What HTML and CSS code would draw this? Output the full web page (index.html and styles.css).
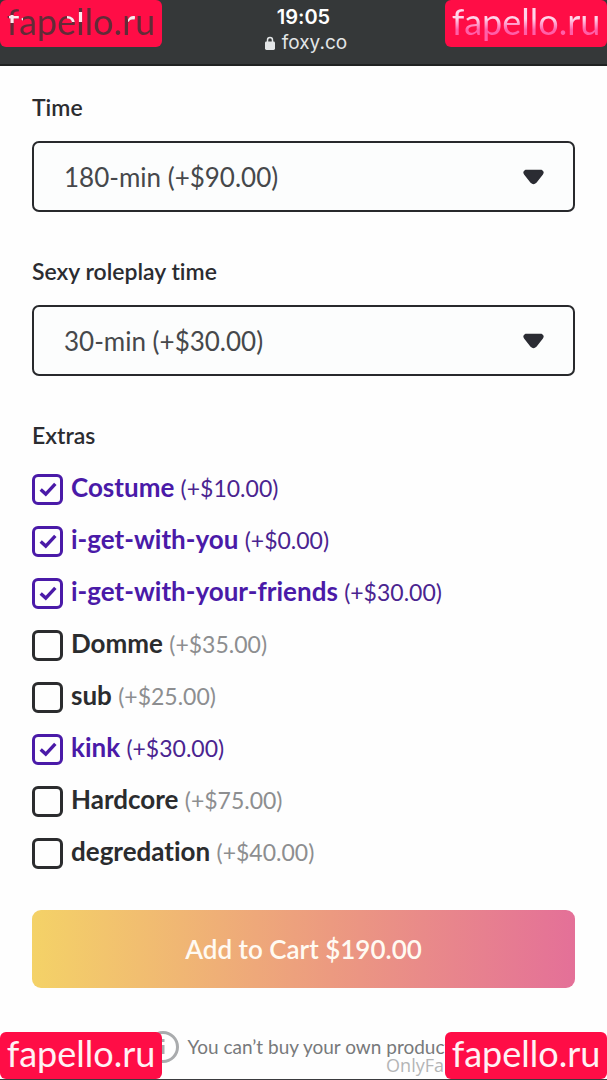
FILE: index.html
```html
<!DOCTYPE html>
<html lang="en">
<head>
<meta charset="utf-8">
<meta name="viewport" content="width=device-width, initial-scale=1">
<title>foxy.co</title>
<link rel="stylesheet" href="styles.css">
</head>
<body>
<div class="screen">
  <header class="browser-bar">
    <div class="clock">19:05</div>
    <div class="address">
      <svg class="lock" viewBox="0 0 12 14" aria-hidden="true"><path d="M3.500 7V4a2.500 2.500 0 0 1 5 0V7" fill="none" stroke="currentColor" stroke-width="1.500"/><rect x="1" y="5.500" width="10" height="8.500" rx="1.400" fill="currentColor"/></svg>
      <span>foxy.co</span>
    </div>
  </header>
  <main class="product">
    <form class="options">
      <div class="field">
        <label class="label" for="time">Time</label>
        <div class="select-wrap">
          <select class="select" id="time"><option>180-min (+$90.00)</option></select>
          <svg class="arrow" viewBox="0 0 20 14" aria-hidden="true"><path d="M3 1.500H17Q19 2.500 17.500 4.500L12 11.500Q10 13.500 8 11.500L2.500 4.500Q1 2.500 3 1.500Z" fill="currentColor" stroke="currentColor" stroke-width="1.500" stroke-linejoin="round"/></svg>
        </div>
      </div>
      <div class="field">
        <label class="label" for="roleplay">Sexy roleplay time</label>
        <div class="select-wrap">
          <select class="select" id="roleplay"><option>30-min (+$30.00)</option></select>
          <svg class="arrow" viewBox="0 0 20 14" aria-hidden="true"><path d="M3 1.500H17Q19 2.500 17.500 4.500L12 11.500Q10 13.500 8 11.500L2.500 4.500Q1 2.500 3 1.500Z" fill="currentColor" stroke="currentColor" stroke-width="1.500" stroke-linejoin="round"/></svg>
        </div>
      </div>
      <fieldset class="extras">
        <legend class="label">Extras</legend>
        <label class="extra"><span class="box"><input class="check" type="checkbox" checked><svg class="tick" viewBox="0 0 16 14" aria-hidden="true"><path d="M1.500 7.500L6 11.500L14.500 2.500"/></svg></span><span class="name">Costume <span class="price">(+$10.00)</span></span></label>
        <label class="extra"><span class="box"><input class="check" type="checkbox" checked><svg class="tick" viewBox="0 0 16 14" aria-hidden="true"><path d="M1.500 7.500L6 11.500L14.500 2.500"/></svg></span><span class="name">i-get-with-you <span class="price">(+$0.00)</span></span></label>
        <label class="extra"><span class="box"><input class="check" type="checkbox" checked><svg class="tick" viewBox="0 0 16 14" aria-hidden="true"><path d="M1.500 7.500L6 11.500L14.500 2.500"/></svg></span><span class="name">i-get-with-your-friends <span class="price">(+$30.00)</span></span></label>
        <label class="extra"><span class="box"><input class="check" type="checkbox"></span><span class="name">Domme <span class="price">(+$35.00)</span></span></label>
        <label class="extra"><span class="box"><input class="check" type="checkbox"></span><span class="name">sub <span class="price">(+$25.00)</span></span></label>
        <label class="extra"><span class="box"><input class="check" type="checkbox" checked><svg class="tick" viewBox="0 0 16 14" aria-hidden="true"><path d="M1.500 7.500L6 11.500L14.500 2.500"/></svg></span><span class="name">kink <span class="price">(+$30.00)</span></span></label>
        <label class="extra"><span class="box"><input class="check" type="checkbox"></span><span class="name">Hardcore <span class="price">(+$75.00)</span></span></label>
        <label class="extra"><span class="box"><input class="check" type="checkbox"></span><span class="name">degredation <span class="price">(+$40.00)</span></span></label>
      </fieldset>
      <button class="add" type="button">Add to Cart $190.00</button>
    </form>
    <p class="notice">
      <svg class="info" viewBox="0 0 32 32" aria-hidden="true"><circle cx="16" cy="16" r="14.500"/><path d="M16 14V23M16 8V11"/></svg>
      <span>You can’t buy your own products</span>
    </p>
  </main>
  <div class="credit">OnlyFa</div>
  <div class="mark mark-top-left"><span>fapello.ru</span></div>
  <div class="mark mark-top-right"><span>fapello.ru</span></div>
  <div class="mark mark-bottom-left"><span>fapello.ru</span></div>
  <div class="mark mark-bottom-right"><span>fapello.ru</span></div>
</div>
</body>
</html>
```
FILE: styles.css
```css
* {
  box-sizing: border-box;
}

body {
  margin: 0;
  background: #fefefe;
  color: #2b2c30;
  font-family: Lato, sans-serif;
  font-variant-ligatures: none;
}

.screen {
  position: relative;
  min-height: 100vh;
  overflow: hidden;
  border-bottom: 1px solid #3a3b3e;
}

.browser-bar {
  display: flex;
  flex-direction: column;
  align-items: center;
  height: 66px;
  padding-top: 5px;
  background: #353839;
  border-bottom: 2px solid #202222;
  color: #fff;
  font-family: Inter, sans-serif;
}

.clock {
  font-size: 20px;
  font-weight: 600;
  line-height: 24px;
}

.address {
  display: flex;
  align-items: center;
  gap: 6px;
  padding-left: 4px;
  color: #e3e6e7;
  font-size: 19px;
  line-height: 28px;
}

.lock {
  width: 12px;
  height: 14px;
}

.product {
  padding: 27px 32px 0;
}

.field {
  margin-bottom: 45px;
}

.label {
  display: block;
  padding: 0;
  font-size: 23px;
  font-weight: 600;
  line-height: 28px;
}

.select-wrap {
  display: grid;
  align-items: center;
  margin-top: 20px;
}

.select {
  grid-area: 1 / 1;
  width: 100%;
  height: 71px;
  padding: 0 30px;
  appearance: none;
  border: 2px solid #28292c;
  border-radius: 7px;
  background: #fcfdfd;
  color: #46484b;
  font: 400 26px Lato, sans-serif;
}

.arrow {
  grid-area: 1 / 1;
  justify-self: end;
  width: 23px;
  height: 16px;
  margin-right: 30px;
  color: #2b2c33;
  pointer-events: none;
}

.extras {
  min-width: 0;
  margin: 0 0 31px;
  padding: 0;
  border: 0;
}

.extras .label {
  margin-bottom: 14px;
}

.extra {
  display: flex;
  align-items: center;
  gap: 8px;
  height: 52px;
  color: #2b2c2e;
}

.extra:has(:checked) {
  color: #4a1aa8;
}

.box {
  display: grid;
  place-items: center;
}

.check {
  grid-area: 1 / 1;
  width: 31px;
  height: 31px;
  margin: 0;
  appearance: none;
  border: 3px solid currentColor;
  border-radius: 6px;
  color: inherit;
}

.tick {
  grid-area: 1 / 1;
  width: 18px;
  height: 16px;
  fill: none;
  stroke: currentColor;
  stroke-width: 3;
  pointer-events: none;
}

.name {
  padding-bottom: 3px;
  font-size: 26px;
  font-weight: 700;
  line-height: 32px;
}

.price {
  color: #8d8e90;
  font-size: 23px;
  font-weight: 400;
}

.extra:has(:checked) .price {
  color: #4a2490;
}

.add {
  display: block;
  width: 100%;
  height: 78px;
  border: 0;
  border-radius: 9px;
  background: linear-gradient(90deg, #f4d267, #ec9a80 55%, #e47098);
  color: #fffaf2;
  font: 600 26px Lato, sans-serif;
}

.notice {
  display: flex;
  align-items: center;
  justify-content: center;
  gap: 8px;
  margin: 43px 0 0;
  color: #77797b;
  font-size: 19px;
  line-height: 28px;
}

.info {
  width: 32px;
  height: 32px;
  fill: none;
  stroke: #a9abad;
  stroke-width: 3;
}

.credit {
  position: absolute;
  right: 163px;
  bottom: 3px;
  color: #b4b5b6;
  font: 400 18px/22px "Open Sans", sans-serif;
}

.mark {
  position: absolute;
  width: 162px;
  height: 47px;
  border-radius: 6px;
  background: #ff0d46;
  color: #fff1f4;
  font-size: 36px;
  line-height: 42px;
  text-align: center;
}

.mark-top-left {
  top: 0;
  left: 0;
}

.mark-top-left span {
  background: linear-gradient(#ffe9ee, #ffe9ee) 2px 16px / 14px 8px no-repeat,
    linear-gradient(#ffe9ee, #ffe9ee) 60px 13px / 20px 10px no-repeat,
    linear-gradient(#ffe9ee, #ffe9ee) 121px 14px / 8px 9px no-repeat,
    #622b38;
  background-clip: text;
  color: transparent;
}

.mark-top-right {
  top: 0;
  right: 0;
}

.mark-top-right span {
  background: linear-gradient(#ffd5ea 45%, #ff5fa8 70%);
  background-clip: text;
  color: transparent;
}

.mark-bottom-left {
  bottom: 0;
  left: 0;
}

.mark-bottom-right {
  right: 0;
  bottom: 0;
}
```
